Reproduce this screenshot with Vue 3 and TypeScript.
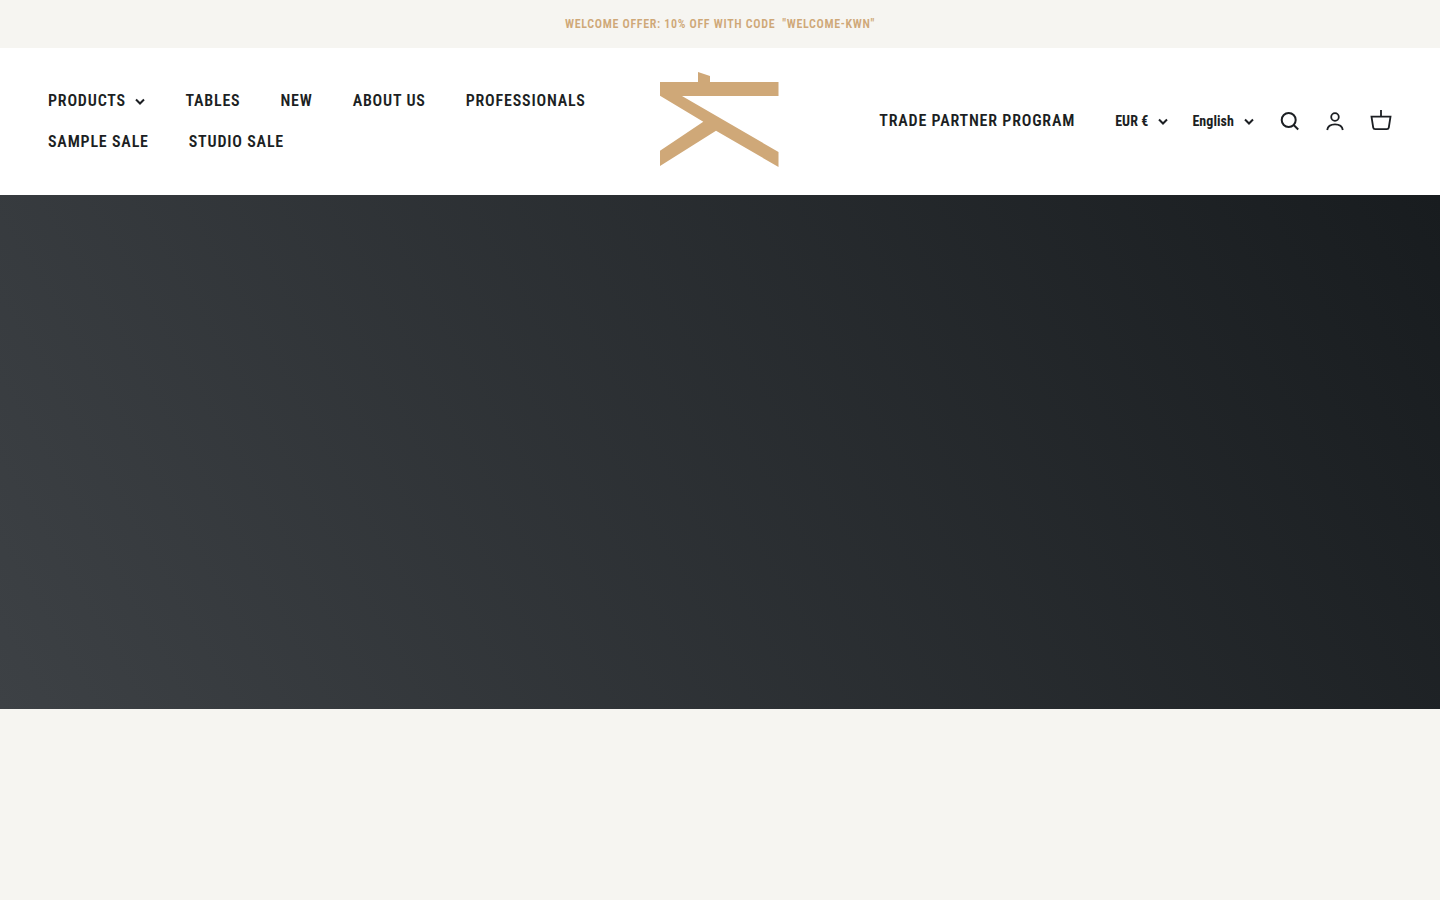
<script setup lang="ts">
interface NavLink {
  label: string
  caret?: boolean
}

const navLinks: NavLink[] = [
  { label: 'PRODUCTS', caret: true },
  { label: 'TABLES' },
  { label: 'NEW' },
  { label: 'ABOUT US' },
  { label: 'PROFESSIONALS' },
  { label: 'SAMPLE SALE' },
  { label: 'STUDIO SALE' }
]
</script>

<template>
  <div class="page">
    <div class="announcement">WELCOME OFFER: 10% OFF WITH CODE &nbsp;"WELCOME-KWN"</div>

    <header class="header">
      <nav class="nav">
        <a v-for="link in navLinks" :key="link.label" class="nav-link">
          {{ link.label }}
          <svg v-if="link.caret" class="caret" viewBox="0 0 10 7" fill="none">
            <path d="M1 1.5l4 4 4-4" stroke="currentColor" stroke-width="2" />
          </svg>
        </a>
      </nav>

      <svg class="logo" viewBox="0 0 119 95">
        <path
          fill="#cfa878"
          d="M38 0L50 4V10H118.5V24H22L118.5 80V95L56 58.700L0 94V78.700L43.300 49.700L0 23.700V10H38Z"
        />
      </svg>

      <div class="actions">
        <a class="nav-link">TRADE PARTNER PROGRAM</a>
        <div class="selectors">
          <a class="selector">
            EUR €
            <svg class="caret" viewBox="0 0 10 7" fill="none">
              <path d="M1 1.5l4 4 4-4" stroke="currentColor" stroke-width="2" />
            </svg>
          </a>
          <a class="selector">
            English
            <svg class="caret" viewBox="0 0 10 7" fill="none">
              <path d="M1 1.5l4 4 4-4" stroke="currentColor" stroke-width="2" />
            </svg>
          </a>
        </div>
        <div class="icons">
          <svg class="icon" viewBox="0 0 22 22" fill="none" stroke="currentColor" stroke-width="2">
            <circle cx="10.700" cy="10" r="7" />
            <path d="M15.700 15l4.500 4.500" />
          </svg>
          <svg class="icon" viewBox="0 0 22 22" fill="none" stroke="currentColor" stroke-width="1.800">
            <circle cx="11" cy="7" r="3.800" />
            <path d="M3.200 20c.6-3.800 3.700-5.600 7.800-5.600s7.200 1.800 7.800 5.600" />
          </svg>
          <svg class="icon" viewBox="0 0 22 22" fill="none" stroke="currentColor" stroke-width="1.800">
            <path d="M11 0v6.700M1.500 6.700h19l-1.700 10.800a2 2 0 0 1-2 1.700H5.200a2 2 0 0 1-2-1.700L1.500 6.700Z" />
          </svg>
        </div>
      </div>
    </header>

    <section class="hero"></section>
  </div>
</template>

<style scoped>
.page {
  min-height: 900px;
  background: #f6f5f1;
  font-family: Roboto, "Liberation Sans", sans-serif;
  font-stretch: 75%;
  color: #1c1f23;
}

.announcement {
  height: 48px;
  display: flex;
  align-items: center;
  justify-content: center;
  color: #cfa878;
  font-size: 12px;
  font-weight: 600;
  letter-spacing: 0.68px;
}

.header {
  height: 147px;
  background: #fff;
  padding: 0 48px 2px;
  display: grid;
  grid-template-columns: 1fr auto 1fr;
  align-items: center;
  column-gap: 40px;
  box-sizing: border-box;
}

.nav {
  display: flex;
  flex-wrap: wrap;
  column-gap: 40px;
  row-gap: 17px;
  padding-top: 2px;
}

.nav-link {
  display: inline-flex;
  align-items: center;
  gap: 9.5px;
  font-size: 16px;
  line-height: 24px;
  font-weight: 600;
  letter-spacing: 0.8px;
  white-space: nowrap;
}

.caret {
  width: 10px;
  height: 7px;
}

.logo {
  width: 119px;
  height: 95px;
  margin: 0 1px 2px 0;
  display: block;
}

.actions {
  display: flex;
  align-items: center;
  justify-content: flex-end;
}

.selectors {
  display: flex;
  gap: 24px;
  margin-left: 40px;
  padding-top: 1px;
}

.selector {
  display: inline-flex;
  align-items: center;
  gap: 10px;
  font-size: 14px;
  font-weight: 700;
  letter-spacing: 0.07px;
  white-space: nowrap;
}

.icons {
  display: flex;
  gap: 24px;
  margin-left: 24px;
}

.icon {
  width: 22px;
  height: 22px;
  display: block;
}

.hero {
  height: 514px;
  background: linear-gradient(60deg, #3d4145 0%, #181c1f 100%);
}
</style>

<style>
body {
  background: #f6f5f1;
}
</style>
